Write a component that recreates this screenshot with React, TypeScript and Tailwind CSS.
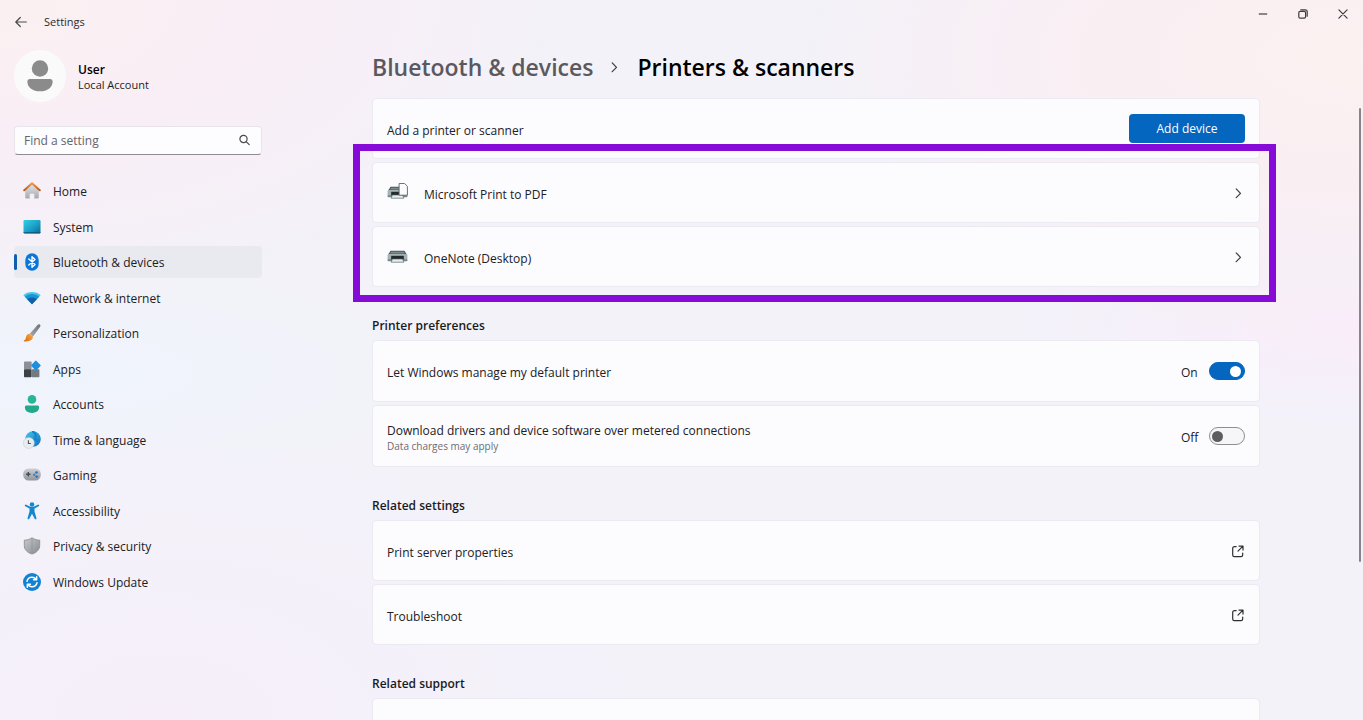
import type { ReactNode } from "react";

const HomeIcon = () => (
  <svg viewBox="0 0 18 18" className="w-[18px] h-[18px]">
    <defs>
      <linearGradient id="homeBody" x1="0" y1="0" x2="0" y2="1">
        <stop offset="0" stopColor="#e4e4e6" />
        <stop offset="1" stopColor="#a9a9ad" />
      </linearGradient>
      <linearGradient id="homeRoof" x1="0" y1="0" x2="0" y2="1">
        <stop offset="0" stopColor="#f0964b" />
        <stop offset="1" stopColor="#b75c20" />
      </linearGradient>
    </defs>
    <path d="M2.200 8 9 2l6.800 6v7.600c0 .5-.4.900-.9.900h-3.600v-4.800H6.700v4.800H3.100a.9.900 0 0 1-.9-.9z" fill="url(#homeBody)" />
    <path d="M1.200 8.300 9 1.300l7.800 7" fill="none" stroke="url(#homeRoof)" strokeWidth="2" strokeLinecap="round" strokeLinejoin="round" />
  </svg>
);

const SystemIcon = () => (
  <svg viewBox="0 0 18 18" className="w-[18px] h-[18px]">
    <defs>
      <linearGradient id="systemScreen" x1="0" y1="0" x2="1" y2="1">
        <stop offset="0" stopColor="#35cfe4" />
        <stop offset="0.550" stopColor="#1a9fc6" />
        <stop offset="1" stopColor="#0b6796" />
      </linearGradient>
    </defs>
    <rect x="0.500" y="2" width="17" height="13.500" rx="1.200" fill="url(#systemScreen)" />
    <path d="M.5 14h17v.3c0 .7-.5 1.200-1.200 1.200H1.700c-.7 0-1.200-.5-1.200-1.200z" fill="#0d4f78" opacity="0.700" />
  </svg>
);

const BluetoothIcon = () => (
  <svg viewBox="0 0 18 18" className="w-[18px] h-[18px]">
    <rect x="2.300" y="0.200" width="13.400" height="17.600" rx="6.700" fill="#0b76d8" />
    <path d="M5.800 6 12 11.600 9 14.300V3.700l3 2.700L5.800 12" fill="none" stroke="#fff" strokeWidth="1.400" strokeLinejoin="round" strokeLinecap="round" />
  </svg>
);

const NetworkIcon = () => (
  <svg viewBox="0 0 18 18" className="w-[18px] h-[18px]">
    <path d="M.4 6.300C5 1.900 13 1.900 17.600 6.300L9 15.200z" fill="#41c9ec" />
    <path d="M1.800 7.700C6 4.100 12 4.100 16.200 7.700L9 15.200z" fill="#1b93d4" />
    <path d="M4.200 10.200c2.600-2.200 7-2.200 9.600 0L9 15.200z" fill="#1360a8" />
  </svg>
);

const PersonalizationIcon = () => (
  <svg viewBox="0 0 18 18" className="w-[18px] h-[18px]">
    <defs>
      <linearGradient id="brushHandle" x1="1" y1="0" x2="0" y2="1">
        <stop offset="0" stopColor="#6c7378" />
        <stop offset="1" stopColor="#a5abb0" />
      </linearGradient>
      <linearGradient id="brushTip" x1="1" y1="0" x2="0" y2="1">
        <stop offset="0" stopColor="#fbab45" />
        <stop offset="1" stopColor="#d96a10" />
      </linearGradient>
    </defs>
    <path d="M16.900.6c.8.700.6 1.700.1 2.500L10 12.500 6.800 9.700 14.500.900c.8-.8 1.700-.9 2.400-.3z" fill="url(#brushHandle)" />
    <path d="M6.600 9.800 9.900 12.600c.2 3-2.700 5.300-8.600 4.800-.7-.1-.8-.7-.2-1 1.700-.9 1.500-2 2-3.700.5-1.600 1.800-2.900 3.500-2.900z" fill="url(#brushTip)" />
  </svg>
);

const AppsIcon = () => (
  <svg viewBox="0 0 18 18" className="w-[18px] h-[18px]">
    <rect x="1" y="1.500" width="7.600" height="8" rx="0.800" fill="#8b9196" />
    <rect x="1" y="9.200" width="7.600" height="8" rx="0.800" fill="#3c4146" />
    <rect x="8.600" y="9.200" width="7.800" height="8" rx="0.800" fill="#737a80" />
    <path d="m12.900.5 4.600 4.600c.3.300.3.700 0 1l-4.100 4.100c-.3.300-.7.300-1 0L8.300 6.100c-.3-.3-.3-.7 0-1L12.400.700z" fill="#1d8fe0" />
  </svg>
);

const AccountsIcon = () => (
  <svg viewBox="0 0 18 18" className="w-[18px] h-[18px]">
    <circle cx="9" cy="4.400" r="4.300" fill="#27b598" />
    <path d="M3.500 10.600h11c.9 0 1.600.7 1.600 1.600 0 3.600-3.100 5.700-7.100 5.700s-7.100-2.100-7.100-5.700c0-.9.700-1.600 1.600-1.600z" fill="#22a98c" />
  </svg>
);

const TimeIcon = () => (
  <svg viewBox="0 0 18 18" className="w-[18px] h-[18px]">
    <defs>
      <linearGradient id="globe" x1="0" y1="0" x2="1" y2="1">
        <stop offset="0" stopColor="#45c8e8" />
        <stop offset="1" stopColor="#0f6fc0" />
      </linearGradient>
    </defs>
    <circle cx="10" cy="8" r="7.800" fill="url(#globe)" />
    <path d="M9 .4c3 .8 4.600 3.600 3.200 6.200-1 1.800.8 3.200 3.600 2.600" fill="none" stroke="#1583cb" strokeWidth="2" />
    <circle cx="5.800" cy="12" r="5.500" fill="#e9ecef" stroke="#c3c8cd" strokeWidth="0.500" />
    <path d="M5.400 9.300v3.200h2.400" fill="none" stroke="#50565c" strokeWidth="1.100" />
  </svg>
);

const GamingIcon = () => (
  <svg viewBox="0 0 18 18" className="w-[18px] h-[18px]">
    <defs>
      <linearGradient id="gamepad" x1="0" y1="0" x2="0" y2="1">
        <stop offset="0" stopColor="#ccd0d5" />
        <stop offset="1" stopColor="#8f959c" />
      </linearGradient>
    </defs>
    <rect x="0.200" y="2.500" width="17.600" height="12" rx="5.500" fill="url(#gamepad)" />
    <path d="M5.300 6v4.400M3.100 8.200h4.400" stroke="#454b51" strokeWidth="1.400" />
    <circle cx="13.500" cy="6.400" r="1.200" fill="#1c6fb8" />
    <circle cx="11.300" cy="8.700" r="1.200" fill="#3c85c0" />
    <circle cx="13.700" cy="10.600" r="1.200" fill="#1c6fb8" />
  </svg>
);

const AccessibilityIcon = () => (
  <svg viewBox="0 0 18 18" className="w-[18px] h-[18px]">
    <circle cx="9" cy="2.500" r="2.300" fill="#1487d0" />
    <path d="M2.800 3.500 6.800 5.600h4.400l4-2.100M9 6v4.500" fill="none" stroke="#1487d0" strokeWidth="1.900" strokeLinecap="round" strokeLinejoin="round" />
    <path d="M6.500 5.600h5v4l1.900 6.500c.3 1.200-1.200 1.700-1.700.6L9 11.700l-2.700 5c-.5 1.100-2 .6-1.700-.6l1.900-6.500z" fill="#1487d0" />
  </svg>
);

const PrivacyIcon = () => (
  <svg viewBox="0 0 18 18" className="w-[18px] h-[18px]">
    <defs>
      <linearGradient id="shield" x1="0" y1="0" x2="1" y2="1">
        <stop offset="0" stopColor="#c9cbce" />
        <stop offset="1" stopColor="#85898d" />
      </linearGradient>
    </defs>
    <path d="M9 .8c2.300 1.500 4.600 2.300 7.700 2.400v5.300c0 4.200-2.900 6.900-7.700 8.600-4.800-1.700-7.700-4.400-7.700-8.600V3.200C4.400 3.100 6.700 2.300 9 .8z" fill="url(#shield)" stroke="#8b8e92" strokeWidth="0.900" />
    <path d="M9 2v14" stroke="#8f9397" strokeWidth="0.700" />
  </svg>
);

const UpdateIcon = () => (
  <svg viewBox="0 0 18 18" className="w-[18px] h-[18px]">
    <circle cx="9" cy="9" r="9" fill="#1182d2" />
    <path d="M4 8.300C4.500 5.700 6.600 4.200 9 4.200c1.800 0 3.200.8 4.200 2.100M14 9.700c-.5 2.600-2.600 4.100-5 4.100-1.800 0-3.200-.8-4.200-2.100" fill="none" stroke="#fff" strokeWidth="1.500" strokeLinecap="round" />
    <path d="M13.700 3.600v3.200h-3.200M4.300 14.400v-3.200h3.200" fill="none" stroke="#fff" strokeWidth="1.400" strokeLinecap="round" strokeLinejoin="round" />
  </svg>
);

const PrinterIcon = ({ withPage = false }: { withPage?: boolean }) => (
  <svg viewBox="0 0 21 18" className="w-[21px] h-[18px] shrink-0 mb-0.5">
    <path d="M3.500 3.800h14l2.300 3.800H1.200z" fill="#4d585c" />
    <path d="M4.200 4.800h12.600l1 1.800H3.200z" fill="#7d8c8f" />
    <rect x="0.600" y="7" width="19.800" height="7" rx="1" fill="#a3b1b3" />
    <rect x="0.600" y="12.200" width="19.800" height="2" rx="0.800" fill="#77868a" />
    <rect x="4.200" y="8.800" width="12.600" height="3.800" fill="#23292c" />
    <path d="M5.300 12h10.400l1.100 3.200H4.200z" fill="#e6eef0" stroke="#59666a" strokeWidth="0.700" />
    {withPage && (
      <path d="M12.100.5h5.500l2.800 2.800v8.900h-8.300z" fill="#fbfbfb" stroke="#5d6367" strokeWidth="0.900" strokeLinejoin="round" />
    )}
  </svg>
);

const ChevronIcon = () => (
  <svg viewBox="0 0 12 12" className="w-3 h-3 shrink-0" fill="none" stroke="#3a3a3e" strokeWidth="1.200" strokeLinecap="round" strokeLinejoin="round">
    <path d="m3.200 1.900 4.300 4.400-4.300 4.400" />
  </svg>
);

const ExternalIcon = () => (
  <svg viewBox="0 0 14 14" className="w-3.5 h-3.5 shrink-0" fill="none" stroke="#2f2f33" strokeWidth="1.200" strokeLinecap="round" strokeLinejoin="round">
    <path d="M5.200 2.600H3.400c-1 0-1.700.7-1.700 1.700v6.600c0 1 .7 1.700 1.700 1.700H10c1 0 1.700-.7 1.700-1.700V9" />
    <path d="M8 2.100h4v4M11.900 2.200 7 7.100" />
  </svg>
);

const navItems = [
  { label: "Home", icon: <HomeIcon /> },
  { label: "System", icon: <SystemIcon /> },
  { label: "Bluetooth & devices", icon: <BluetoothIcon />, active: true },
  { label: "Network & internet", icon: <NetworkIcon /> },
  { label: "Personalization", icon: <PersonalizationIcon /> },
  { label: "Apps", icon: <AppsIcon /> },
  { label: "Accounts", icon: <AccountsIcon /> },
  { label: "Time & language", icon: <TimeIcon /> },
  { label: "Gaming", icon: <GamingIcon /> },
  { label: "Accessibility", icon: <AccessibilityIcon /> },
  { label: "Privacy & security", icon: <PrivacyIcon /> },
  { label: "Windows Update", icon: <UpdateIcon /> },
];

const TitleBar = () => (
  <header className="flex items-start justify-between h-11 shrink-0">
    <div className="flex items-center h-11 pl-3.5 gap-4">
      <button type="button" aria-label="Back" className="w-3.5 h-3.5">
        <svg viewBox="0 0 14 14" className="w-3.5 h-3.5" fill="none" stroke="#4a4a4e" strokeWidth="1.200" strokeLinecap="round" strokeLinejoin="round">
          <path d="M12.300 7H2M6.300 2.500 1.800 7l4.500 4.500" />
        </svg>
      </button>
      <span className="text-[11px] text-[#2b2b2e]">Settings</span>
    </div>
    <div className="flex">
      <button type="button" aria-label="Minimize" className="w-10 h-7 flex items-center justify-center">
        <svg viewBox="0 0 10 10" className="w-2.5 h-2.5" stroke="#3c3c40" strokeWidth="1.200">
          <path d="M.8 5h8.400" />
        </svg>
      </button>
      <button type="button" aria-label="Restore" className="w-10 h-7 flex items-center justify-center">
        <svg viewBox="0 0 10 10" className="w-2.5 h-2.5" fill="none" stroke="#3c3c40" strokeWidth="1.200">
          <rect x="0.800" y="2.400" width="6.800" height="6.800" rx="1.400" />
          <path d="M2.800.8h4.400c1.200 0 2 .8 2 2v4.400" strokeLinecap="round" />
        </svg>
      </button>
      <button type="button" aria-label="Close" className="w-10 h-7 flex items-center justify-center">
        <svg viewBox="0 0 10 10" className="w-2.5 h-2.5" stroke="#3c3c40" strokeWidth="1.200" strokeLinecap="round">
          <path d="m.9.900 8.200 8.200M9.100.900.900 9.100" />
        </svg>
      </button>
    </div>
  </header>
);

const Sidebar = () => (
  <aside className="w-[248px] shrink-0 ml-3.5 pt-1.5">
    <div className="flex items-center gap-3">
      <div className="w-[52px] h-[52px] rounded-full bg-[#fbfafb] flex items-center justify-center">
        <svg viewBox="0 0 26 32" className="w-[26px] h-8" fill="#8b8b8b">
          <circle cx="13" cy="8.500" r="8.200" />
          <path d="M2.800 19h20.400c1.400 0 2.400 1 2.400 2.400 0 6.200-5.400 9.800-12.600 9.800S.4 27.600.4 21.400C.4 20 1.400 19 2.800 19z" />
        </svg>
      </div>
      <div className="pt-0.5">
        <p className="text-xs leading-[15px] font-semibold text-black">User</p>
        <p className="text-[11px] leading-[15px] text-[#1d1d20]">Local Account</p>
      </div>
    </div>

    <div className="relative mt-6">
      <input
        type="text"
        aria-label="Find a setting"
        placeholder="Find a setting"
        className="block w-full h-[29px] rounded bg-[#fdfcfe] border border-[#e9e4ec] border-b-[#8e8b91] pl-[9px] pr-8 text-xs placeholder:text-[#66646a] outline-none"
      />
      <svg viewBox="0 0 12 12" className="absolute right-3 top-2 w-3 h-3" fill="none" stroke="#4a4a4e" strokeWidth="1.200" strokeLinecap="round">
        <circle cx="5.500" cy="5" r="3.600" />
        <path d="m8.200 7.700 3 3" />
      </svg>
    </div>

    <nav className="mt-5 h-[423px] flex flex-col justify-between">
      {navItems.map((item) => (
        <a
          key={item.label}
          href="#"
          className={
            item.active
              ? "relative flex items-center gap-3 h-8 pl-[9px] rounded bg-[#e9e9f0]"
              : "relative flex items-center gap-3 h-8 pl-[9px] rounded"
          }
        >
          {item.active && <span className="absolute left-0 top-2 w-[3px] h-4 rounded-full bg-[#0f5fae]" />}
          {item.icon}
          <span className="pt-0.5 text-xs text-[#202024]">{item.label}</span>
        </a>
      ))}
    </nav>
  </aside>
);

const cardClass =
  "flex items-center h-[61px] px-3.5 rounded border border-[#ebe9f1] bg-[#fcfbfe] text-xs text-[#202024]";

const Section = ({ title, children }: { title: string; children?: ReactNode }) => (
  <section className="mt-[29px]">
    <h2 className="text-xs leading-5 font-semibold text-[#1a1a1d] mb-1">{title}</h2>
    <div className="flex flex-col gap-[3px]">{children}</div>
  </section>
);

const Printer = ({ name, withPage }: { name: string; withPage?: boolean }) => (
  <a href="#" className={cardClass}>
    <PrinterIcon withPage={withPage} />
    <span className="ml-4 flex-1 pt-[5px]">{name}</span>
    <ChevronIcon />
  </a>
);

const ExternalLink = ({ name }: { name: string }) => (
  <a href="#" className={cardClass}>
    <span className="flex-1 pt-[5px]">{name}</span>
    <ExternalIcon />
  </a>
);

const Toggle = ({ id, label, note, on = false }: { id: string; label: string; note?: string; on?: boolean }) => (
  <div className="flex items-center h-[62px] px-3.5 rounded border border-[#ebe9f1] bg-[#fcfbfe] text-xs text-[#202024]">
    <label htmlFor={id} className="flex-1 pt-[3px]">
      <span className="block leading-4">{label}</span>
      {note && <span className="block text-[10px] leading-[14px] text-[#6c6b71]">{note}</span>}
    </label>
    <span className="w-7 pt-[3px]">{on ? "On" : "Off"}</span>
    <input
      id={id}
      type="checkbox"
      role="switch"
      defaultChecked={on}
      className="appearance-none flex items-center w-9 h-[18px] px-0.5 rounded-full border border-[#8d8d92] bg-[#f6f5f8] checked:px-[3px] checked:border-[#0566c0] checked:bg-[#0566c0] before:block before:w-[11px] before:h-[11px] before:rounded-full before:bg-[#5d5d60] checked:before:bg-white checked:before:ml-auto"
    />
  </div>
);

const App = () => {
  return (
    <div className="relative flex flex-col h-screen overflow-hidden font-['Open_Sans','Noto_Sans',sans-serif] bg-[#f3f2f9] bg-[radial-gradient(ellipse_at_0%_0%,#fbf0f0_0%,#f9eef6_14%,transparent_30%),radial-gradient(ellipse_at_100%_8%,#fbf1f0_0%,#f9eff4_16%,transparent_30%),radial-gradient(ellipse_at_5%_52%,#eff4fc_0%,transparent_20%),radial-gradient(ellipse_at_100%_45%,#f9edf9_0%,transparent_18%),radial-gradient(ellipse_at_12%_100%,#f6effa_0%,transparent_28%)]">
      <TitleBar />
      <div className="flex flex-1 min-h-0">
        <Sidebar />
        <main className="flex-1 min-w-0 ml-[110px] mr-[103px] pt-2">
          <h1 className="flex items-center text-[23px] leading-[30px] font-semibold mb-4">
            <a href="#" className="text-[#5a595f]">Bluetooth &amp; devices</a>
            <span className="mx-4">
              <ChevronIcon />
            </span>
            <span className="text-black">Printers &amp; scanners</span>
          </h1>

          <div className="flex flex-col gap-[3px]">
            <div className={cardClass}>
              <span className="flex-1 pt-[5px]">Add a printer or scanner</span>
              <button type="button" className="w-[116px] h-[29px] rounded bg-[#0566c0] text-white">
                Add device
              </button>
            </div>
            <div className="relative flex flex-col gap-[3px]">
              <Printer name="Microsoft Print to PDF" withPage />
              <Printer name="OneNote (Desktop)" />
              <div className="absolute -top-[18px] -bottom-[15px] -left-[19px] -right-4 border-7 border-[#860bd6] pointer-events-none" />
            </div>
          </div>

          <Section title="Printer preferences">
            <Toggle id="default-printer" label="Let Windows manage my default printer" on />
            <Toggle
              id="metered"
              label="Download drivers and device software over metered connections"
              note="Data charges may apply"
            />
          </Section>

          <Section title="Related settings">
            <ExternalLink name="Print server properties" />
            <ExternalLink name="Troubleshoot" />
          </Section>

          <Section title="Related support">
            <div className={cardClass} />
          </Section>
        </main>
      </div>
      <div className="absolute right-0.5 top-[15%] h-[63%] w-0.5 rounded-full bg-[#8b838b]" />
    </div>
  );
};

export default App;
